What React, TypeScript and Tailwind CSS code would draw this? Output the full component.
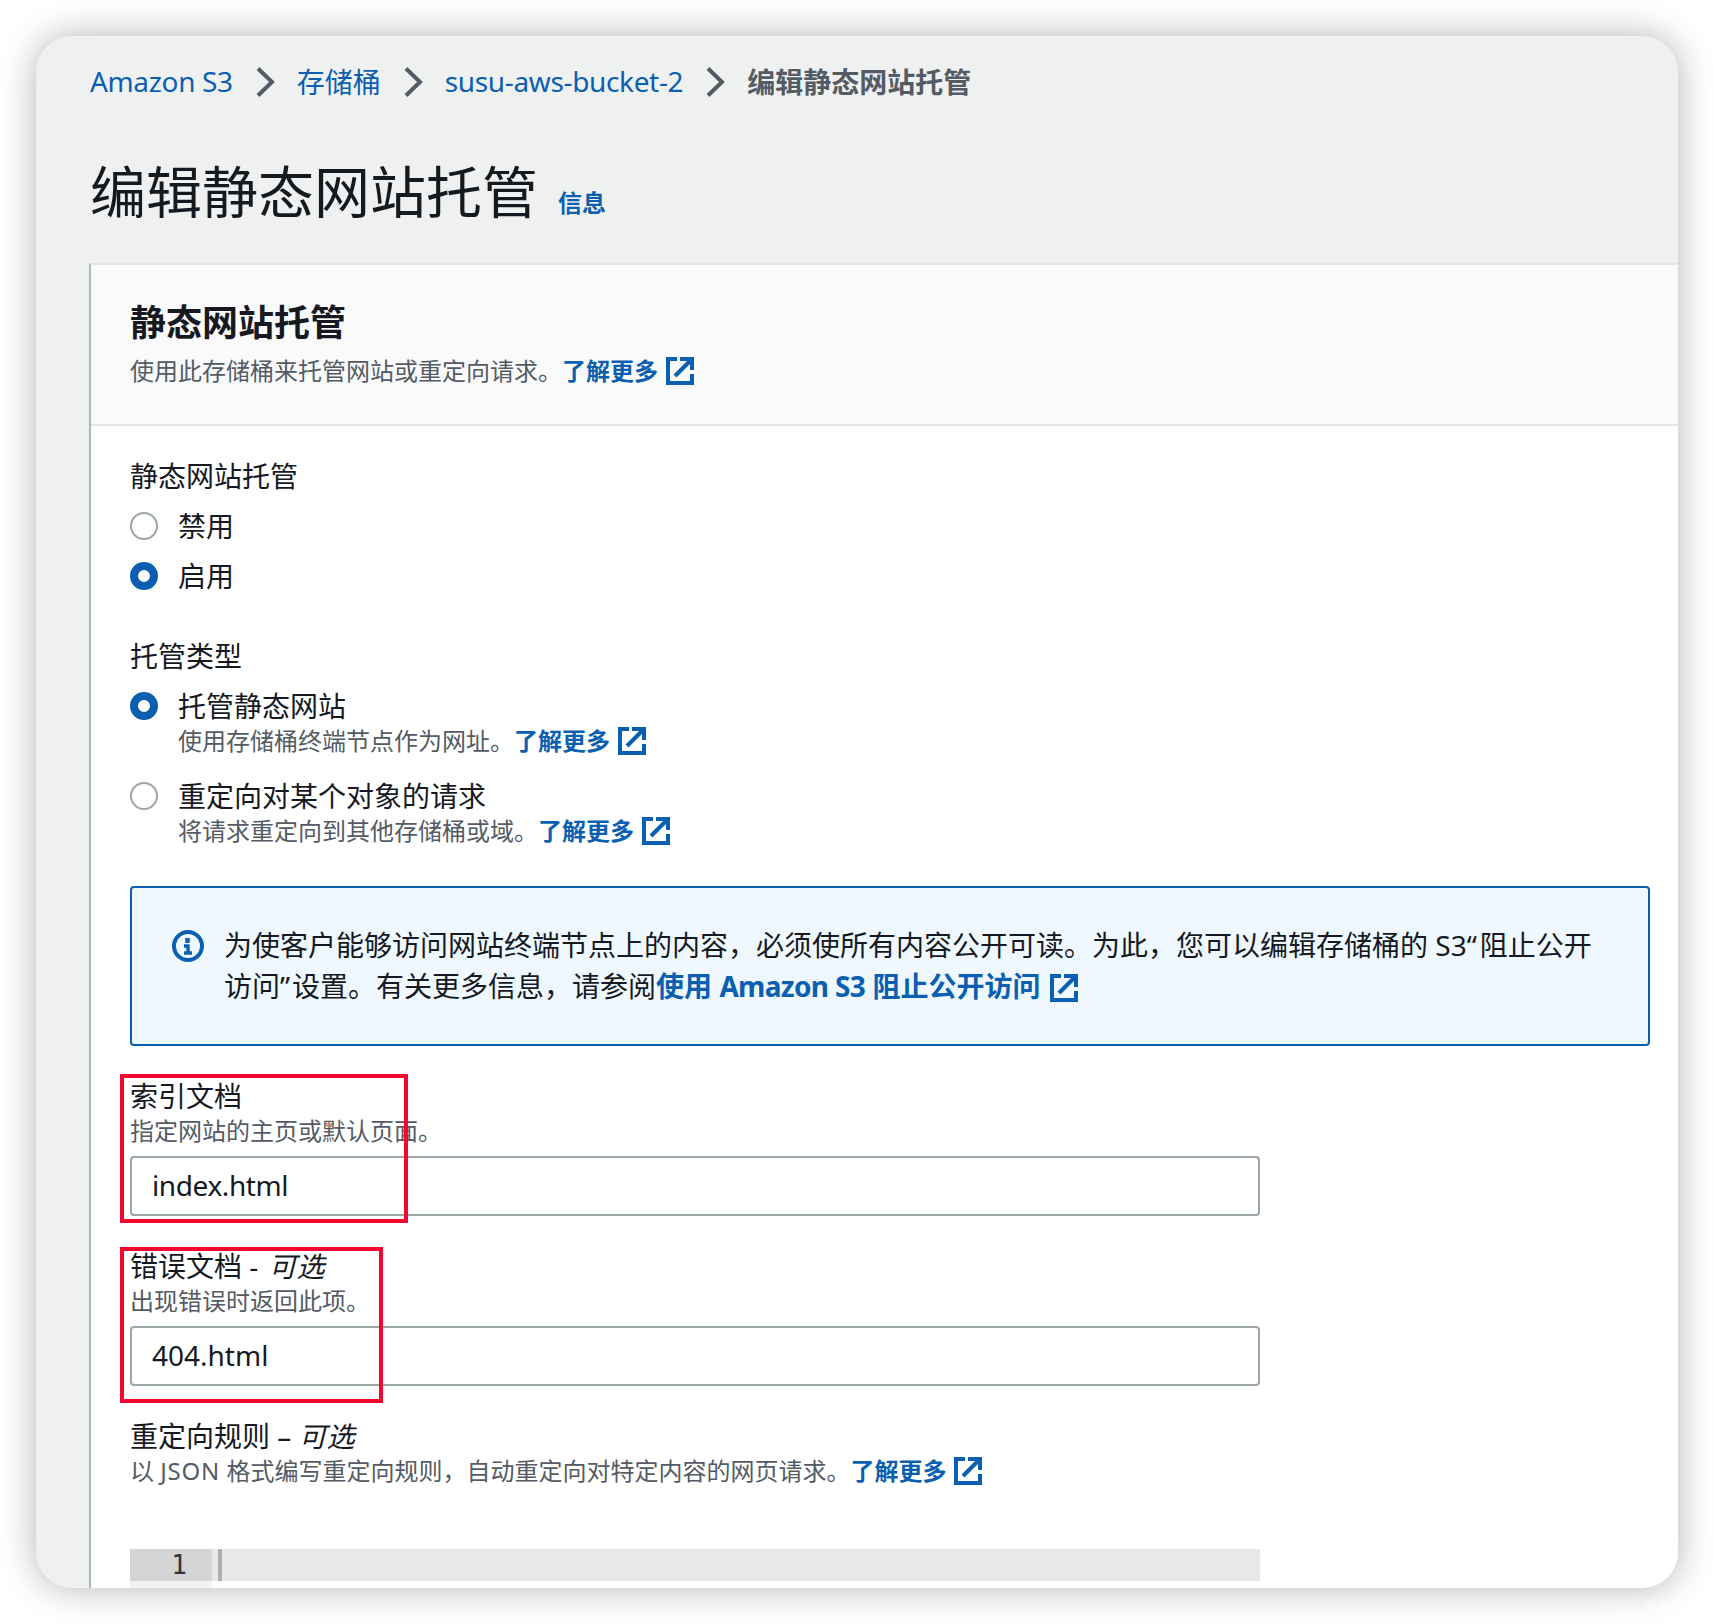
import type { ReactNode } from "react";

const LINK = "text-[#0b5fb0]";

function ExternalIcon({ className = "" }: { className?: string }) {
  return (
    <svg viewBox="0 0 28 28" fill="none" stroke="#0b5fb0" strokeWidth="4" className={`inline-block w-[28px] h-[28px] align-[-5px] ${className}`}>
      <path d="M14 2H26V13" />
      <path d="M25 3 9 19" />
      <path d="M11 2H2V26H26V17" />
    </svg>
  );
}

function LearnMore() {
  return (
    <a className={`${LINK} font-bold`}>
      了解更多
      <ExternalIcon className="ml-[8px]" />
    </a>
  );
}

function Chevron() {
  return (
    <svg viewBox="0 0 20 30" fill="none" stroke="#545b64" strokeWidth="4" className="w-[20px] h-[30px] mx-[22px] shrink-0">
      <path d="M3 1.5 17 15 3 28.5" />
    </svg>
  );
}

function Radio({ checked = false }: { checked?: boolean }) {
  return (
    <span
      className={
        checked
          ? "block w-[28px] h-[28px] rounded-full border-[8px] border-[#0b5fb0] bg-white shrink-0"
          : "block w-[28px] h-[28px] rounded-full border-2 border-[#9ba7a6] bg-white shrink-0"
      }
    />
  );
}

function Desc({ children, className = "" }: { children: ReactNode; className?: string }) {
  return <div className={`text-[24px] leading-[30px] pb-[2px] text-[#545b64] ${className}`}>{children}</div>;
}

function RadioRow({ checked, label, desc, className = "" }: { checked?: boolean; label: string; desc?: ReactNode; className?: string }) {
  return (
    <div className={className}>
      <div className="flex items-center h-[40px] gap-[20px]">
        <Radio checked={checked} />
        <span className="text-[28px] leading-[40px]">{label}</span>
      </div>
      {desc && <Desc className="pl-[48px]">{desc}</Desc>}
    </div>
  );
}

function Field({ label, desc, value, inputClass }: { label: ReactNode; desc: string; value: string; inputClass: string }) {
  return (
    <div className="mt-[30px]">
      <div className="text-[28px] leading-[40px]">{label}</div>
      <Desc>{desc}</Desc>
      <input
        readOnly
        defaultValue={value}
        className={`block w-[1130px] h-[60px] mt-[8px] border-2 border-[#9ba7a6] rounded-[4px] bg-white px-[20px] pb-[2px] text-[28px] text-[#16191f] outline-none ${inputClass}`}
      />
    </div>
  );
}

export default function App() {
  return (
    <div className="relative w-[1714px] h-[1624px] bg-white overflow-hidden font-['Noto_Sans','Noto_Sans_CJK_SC',sans-serif] text-[#16191f]">
      <div className="absolute left-[36px] top-[36px] w-[1642px] h-[1552px] rounded-[36px] overflow-hidden bg-[#eff1f1] shadow-[0_0_36px_rgba(0,0,0,0.3)]">
        <div className="pl-[54px] pt-[26px]">
          {/* breadcrumb */}
          <nav className="flex items-center h-[40px] text-[28px] leading-[40px]">
            <a className={`${LINK} tracking-[-0.35px] pb-[2px]`}>Amazon S3</a>
            <Chevron />
            <a className={LINK}>存储桶</a>
            <Chevron />
            <a className={`${LINK} tracking-[-0.35px] pb-[2px]`}>susu-aws-bucket-2</a>
            <Chevron />
            <span className="font-bold text-[#545b64]">编辑静态网站托管</span>
          </nav>

          <div className="flex items-baseline mt-[53px] h-[72px]">
            <h1 className="text-[56px] leading-[72px] font-normal">编辑静态网站托管</h1>
            <a className={`${LINK} ml-[20px] text-[24px] font-bold -translate-y-[1px]`}>信息</a>
          </div>
        </div>

        {/* card */}
        <section className="ml-[53px] mt-[36px] border-l-2 border-t-2 border-t-[#e1e6e6] border-l-[#aab7b8] bg-white h-[1400px]">
          <header className="h-[161px] bg-[#fafafa] border-b-2 border-[#e1e6e6] pl-[39px] pt-[34px]">
            <h2 className="text-[36px] leading-[48px] font-bold">静态网站托管</h2>
            <p className="mt-[6px] text-[24px] leading-[36px] text-[#545b64]">
              使用此存储桶来托管网站或重定向请求。
              <LearnMore />
            </p>
          </header>

          <div className="pl-[39px] pt-[30px]">
            <div className="text-[28px] leading-[40px]">静态网站托管</div>
            <RadioRow label="禁用" className="mt-[10px]" />
            <RadioRow label="启用" checked className="mt-[10px]" />

            <div className="mt-[40px] text-[28px] leading-[40px]">托管类型</div>
            <RadioRow
              checked
              label="托管静态网站"
              className="mt-[10px]"
              desc={
                <>
                  使用存储桶终端节点作为网址。
                  <LearnMore />
                </>
              }
            />
            <RadioRow
              label="重定向对某个对象的请求"
              className="mt-[18px]"
              desc={
                <>
                  将请求重定向到其他存储桶或域。
                  <LearnMore />
                </>
              }
            />

            {/* info alert */}
            <div className="mt-[38px] flex w-[1520px] h-[160px] border-2 border-[#0b5fb0] rounded-[4px] bg-[#eef8fe] pl-[40px] pt-[37px]">
              <svg viewBox="0 0 32 32" fill="none" stroke="#0b5fb0" className="w-[32px] h-[32px] mt-[5px] shrink-0">
                <circle cx="16" cy="16" r="14" strokeWidth="4" />
                <path d="M15.5 8v5" strokeWidth="4.5" />
                <path d="M12 16H16V22.5M12 23H20" strokeWidth="3.4" />
              </svg>
              <p className="ml-[20px] text-[28px] leading-[41px]">
                为使客户能够访问网站终端节点上的内容，必须使所有内容公开可读。为此，您可以编辑存储桶的 S3<span className="tracking-[3px]">“</span>阻止公开
                <br />
                访问<span className="tracking-[2px]">”</span>设置。有关更多信息，请参阅
                <a className={`${LINK} font-bold`}>
                  使用 <span className="tracking-[-0.66px]">Amazon S3</span> 阻止公开访问
                  <ExternalIcon className="ml-[10px]" />
                </a>
              </p>
            </div>

            <Field label="索引文档" desc="指定网站的主页或默认页面。" value="index.html" inputClass="tracking-[-0.4px]" />
            <Field
              label={
                <>
                  错误文档 - <i className="ml-[3px]">可选</i>
                </>
              }
              desc="出现错误时返回此项。"
              value="404.html"
              inputClass=""
            />

            <div className="mt-[30px] text-[28px] leading-[40px]">
              重定向规则 – <i>可选</i>
            </div>
            <Desc>
              以 <span className="tracking-[0.8px]">JSON</span> 格式编写重定向规则，自动重定向对特定内容的网页请求。
              <LearnMore />
            </Desc>

            {/* code editor, cut off by the window */}
            <div className="mt-[61px] flex w-[1130px] h-[42px]">
              <div className="w-[82px] bg-[#f2f2f2] shrink-0">
                <div className="h-[32px] bg-[#d4d4d4] text-center font-['DejaVu_Sans_Mono',monospace] text-[26px] leading-[33px] pl-[16px] text-[#333333]">1</div>
              </div>
              <div className="flex-1 h-[32px] bg-[#e8e8e8] pl-[6px]">
                <div className="w-[4px] h-[32px] bg-[#b0b0b0]" />
              </div>
            </div>
          </div>
        </section>
      </div>

      {/* annotation boxes drawn over the screenshot */}
      <div className="absolute left-[120px] top-[1074px] w-[288px] h-[149px] border-4 border-[#f5052f]" />
      <div className="absolute left-[120px] top-[1247px] w-[263px] h-[156px] border-4 border-[#f5052f]" />
      <div className="absolute left-[1600px] top-[1596px] text-[14px] text-white/50 font-['Liberation_Sans',sans-serif]">CSDN @@云</div>
    </div>
  );
}
